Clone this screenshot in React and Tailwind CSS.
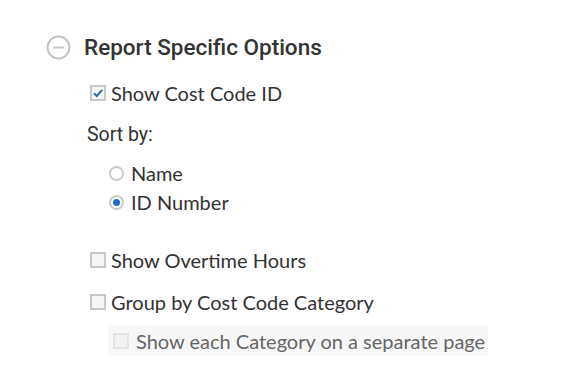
import React, { useState } from 'react';

const Checkbox = ({ checked, disabled }) => (
  <span
    className={`flex h-[16px] w-[16px] shrink-0 items-center justify-center border-2 ${
      disabled ? 'border-[#e4e4e4] bg-[#f3f3f3]' : 'border-[#c8c8c8] bg-[#f7f7f7]'
    }`}
  >
    {checked && (
      <svg viewBox="0 0 12 12" className="h-[12px] w-[12px]">
        <path d="M2 6.2 L4.8 9 L10.2 2.8" fill="none" stroke="#2a6ebd" strokeWidth="2" />
      </svg>
    )}
  </span>
);

const Radio = ({ checked }) => (
  <span className="flex h-[15px] w-[15px] shrink-0 items-center justify-center rounded-full border-2 border-[#c9c9c9] bg-white">
    {checked && <span className="h-[7px] w-[7px] rounded-full bg-[#1f6fc8]" />}
  </span>
);

export default function App() {
  const [sortBy] = useState('id');

  return (
    <div className="h-[372px] w-[568px] bg-white font-['Lato',sans-serif] text-[#333]">
      <div className="flex flex-col pl-[46px] pt-[34px]">
        {/* Section header */}
        <div className="flex items-center gap-[13px]">
          <svg viewBox="0 0 24 24" className="h-[25px] w-[25px]">
            <circle cx="12" cy="12" r="10.5" fill="none" stroke="#c4c4c4" strokeWidth="1.9" />
            <line x1="7" y1="12" x2="17" y2="12" stroke="#c4c4c4" strokeWidth="1.9" />
          </svg>
          <span className="font-['Roboto',sans-serif] text-[22.5px] font-medium leading-[26px] text-[#333]">
            Report Specific Options
          </span>
        </div>

        <div className="mt-[21px] flex flex-col pl-[44px]">
          <label className="flex items-center gap-[5px] text-[20px] leading-[24px]">
            <Checkbox checked />
            Show Cost Code ID
          </label>

          <div className="mt-[18px] -ml-[3px] font-['Roboto',sans-serif] text-[19.5px] leading-[24px]">
            Sort by:
          </div>

          <div className="mt-[12px] flex flex-col pl-[19px]">
            <label className="flex items-center gap-[7px] text-[20px] leading-[29px]">
              <Radio checked={sortBy === 'name'} />
              Name
            </label>
            <label className="flex items-center gap-[7px] text-[20px] leading-[29px]">
              <Radio checked={sortBy === 'id'} />
              ID Number
            </label>
          </div>

          <label className="mt-[31px] flex items-center gap-[5px] text-[20px] leading-[24px]">
            <Checkbox />
            Show Overtime Hours
          </label>

          <label className="mt-[18px] flex items-center gap-[5px] text-[20px] leading-[24px]">
            <Checkbox />
            Group by Cost Code Category
          </label>

          <div className="mt-[11px] ml-[18px] flex w-[380px] items-center gap-[7px] bg-[#f7f7f7] py-[3.5px] pl-[5px] text-[20px] leading-[24px] text-[#666]">
            <Checkbox disabled />
            Show each Category on a separate page
          </div>
        </div>
      </div>
    </div>
  );
}
